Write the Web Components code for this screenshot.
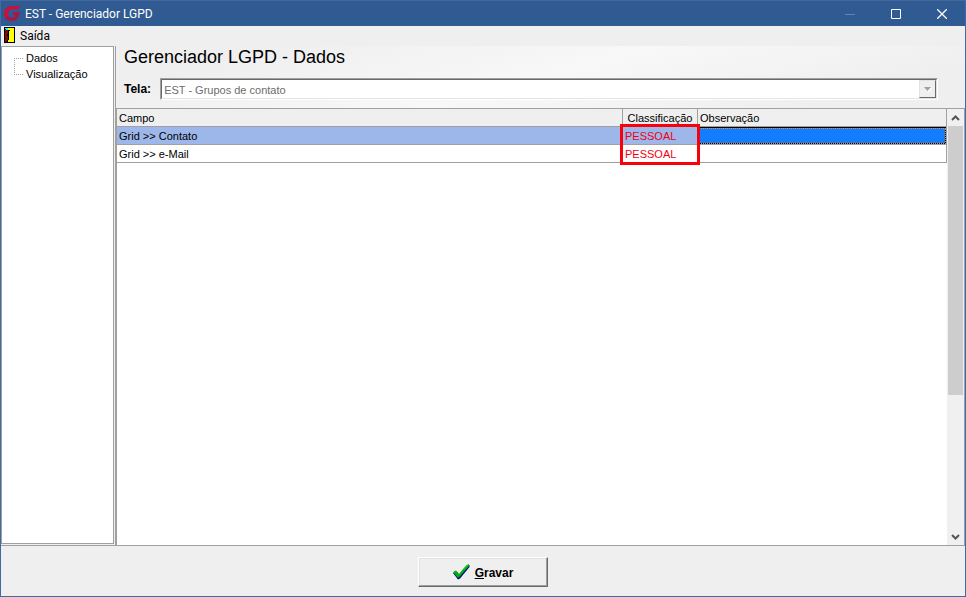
<!doctype html>
<html lang="pt-BR">
<meta charset="utf-8">
<title>EST - Gerenciador LGPD</title>

<style>
  html, body {
    height: 100%;
    margin: 0;
  }
  body {
    font: 11px/16px "Liberation Sans", Arial, sans-serif;
    color: #000;
    --face: #efefef;
    --line: #a0a0a0;
    --frame: #3d6ba5;
    --caption: 12px/16px Roboto, "Open Sans", sans-serif;
  }
</style>

<lgpd-window>
  <title-bar slot="title">EST - Gerenciador LGPD</title-bar>
  <menu-bar slot="menu">Saída</menu-bar>
  <nav-tree slot="nav">
    <nav-item>Dados</nav-item>
    <nav-item>Visualização</nav-item>
  </nav-tree>
  <screen-header slot="header" value="EST - Grupos de contato">Gerenciador LGPD - Dados</screen-header>
  <field-grid slot="grid"></field-grid>
  <scroll-rail slot="scroll"></scroll-rail>
  <save-button slot="footer"></save-button>
</lgpd-window>

<template id="lgpd-window">
  <style>
    :host {
      display: flex;
      flex-direction: column;
      box-sizing: border-box;
      height: 100vh;
      border: 1px solid var(--frame);
      border-top: 0;
      background: var(--face);
    }
    main {
      flex: 1;
      min-height: 0;
      display: flex;
      border-bottom: 1px solid var(--line);
    }
    aside {
      flex: none;
      box-sizing: border-box;
      width: 115px;
      display: flex;
      border-right: 1px solid var(--line);
    }
    .work {
      flex: 1;
      min-width: 0;
      display: flex;
      flex-direction: column;
    }
    .data {
      flex: 1;
      min-height: 0;
      display: flex;
      background: #fff;
      border: 1px solid var(--line);
      border-bottom: 0;
    }
    footer {
      display: flex;
      justify-content: center;
      padding: 11px 0 9px;
    }
  </style>
  <slot name="title"></slot>
  <slot name="menu"></slot>
  <main>
    <aside><slot name="nav"></slot></aside>
    <div class="work">
      <slot name="header"></slot>
      <div class="data">
        <slot name="grid"></slot>
        <slot name="scroll"></slot>
      </div>
    </div>
  </main>
  <footer><slot name="footer"></slot></footer>
</template>

<template id="title-bar">
  <style>
    :host {
      display: flex;
      align-items: center;
      height: 26px;
      box-sizing: border-box;
      border-top: 1px solid #44689b;
      background: #2f5a92;
      color: #fff;
      font: var(--caption);
    }
    .logo { margin: 0 4px 0 3px; }
    .name { flex: 1; }
    button {
      width: 46px;
      height: 25px;
      padding: 0;
      border: 0;
      background: none;
      color: #fff;
    }
    button:disabled { color: #6384b0; }
    svg { display: block; margin: 0 auto; }
  </style>
  <svg class="logo" width="17" height="17" viewBox="0 0 17 17" aria-hidden="true">
    <path d="M16.500 0 14 4.500H8.500Q4.500 4.500 4.500 8.500L4 11 1 13Q0 11 0 9Q0 1 8 1H13Q15 1 16.500 0Z" fill="#c5123f"/>
    <path d="M8 7H16L14 12.500Q12.500 16 8 16Q3 16 1 13L4 10Q5 12.500 8 12.500Q10.500 12.500 11 10H9Z" fill="#a5184a"/>
  </svg>
  <span class="name"><slot></slot></span>
  <button disabled aria-label="Minimizar">
    <svg width="10" height="10"><path d="M0 5.500H10" stroke="currentColor"/></svg>
  </button>
  <button aria-label="Maximizar">
    <svg width="10" height="10"><path d="M.5 .5H9.500V9.500H.5Z" fill="none" stroke="currentColor"/></svg>
  </button>
  <button aria-label="Fechar">
    <svg width="10" height="10"><path d="M0 0 10 10M10 0 0 10" stroke="currentColor" stroke-width="1.300"/></svg>
  </button>
</template>

<template id="menu-bar">
  <style>
    :host {
      display: flex;
      height: 20px;
    }
    button {
      display: flex;
      align-items: center;
      gap: 5px;
      padding: 0 3px 2px;
      border: 0;
      background: none;
      color: inherit;
      font: var(--caption);
    }
    span { padding-top: 2px; }
  </style>
  <button>
    <svg width="11" height="16" aria-hidden="true" shape-rendering="crispEdges">
      <path d="M0 0H11V16H0Z" fill="#000"/>
      <path d="M4 1H10V15H4Z" fill="#ff0"/>
      <path d="M1 1H4V3H1Z" fill="#0ff"/>
      <path d="M1 2H2V3H4V4H5V13H4V14H3V15H1Z" fill="#7b0a0a"/>
      <path d="M4 3H6V4H5V13H4V14H3V13H4Z" fill="#000"/>
      <path d="M3 7H4V9H3Z" fill="#000"/>
    </svg>
    <span><slot></slot></span>
  </button>
</template>

<template id="nav-tree">
  <style>
    :host {
      flex: 1;
      display: block;
      margin: 0 1px 1px 0;
      padding: 3px 0 0 12px;
      background: #fff;
      border: 1px solid var(--line);
    }
  </style>
  <nav><slot></slot></nav>
</template>

<template id="nav-item">
  <style>
    :host {
      display: flex;
      height: 16px;
    }
    i {
      width: 8px;
      height: 8px;
      border-left: 1px solid transparent;
      border-bottom: 1px dotted #a0a0a0;
    }
    :host(:last-child) i {
      height: 16px;
      margin-top: -8px;
      border-left: 1px dotted #a0a0a0;
    }
    a {
      margin-left: 3px;
      color: inherit;
      text-decoration: none;
    }
  </style>
  <i></i><a href="#"><slot></slot></a>
</template>

<template id="screen-header">
  <style>
    :host {
      display: block;
      padding: 1px 27px 8px 8px;
      background: linear-gradient(165deg, #efefef 15%, #f8f8f8 50%, #efefef 85%);
    }
    h1 {
      margin: 0 0 11px;
      font-size: 18px;
      line-height: 20px;
      font-weight: 400;
    }
    .field {
      display: flex;
      align-items: center;
      gap: 9px;
    }
    label {
      font-size: 12px;
      font-weight: 700;
    }
    .combo {
      flex: 1;
      display: flex;
      position: relative;
      border: 1px solid;
      border-color: #a0a0a0 #fff #fff #a0a0a0;
    }
    select {
      appearance: none;
      flex: 1;
      height: 20px;
      padding: 2px 2px 0;
      border: 1px solid;
      border-color: #696969 #e3e3e3 #e3e3e3 #696969;
      border-radius: 0;
      background: #fff;
      color: #6d6d6d;
      font: inherit;
      opacity: 1;
    }
    .arrow {
      position: absolute;
      top: 1px;
      right: 1px;
      bottom: 1px;
      width: 15px;
      display: grid;
      place-items: center;
      background: var(--face);
      border: 1px solid;
      border-color: #e3e3e3 #696969 #696969 #e3e3e3;
      pointer-events: none;
    }
  </style>
  <h1><slot></slot></h1>
  <div class="field">
    <label for="screen">Tela:</label>
    <div class="combo">
      <select id="screen" disabled><option></option></select>
      <span class="arrow">
        <svg width="8" height="5" aria-hidden="true">
          <path d="M1 1H8L4.500 5Z" fill="#fff"/>
          <path d="M0 0H7L3.500 4Z" fill="#a0a0a0"/>
        </svg>
      </span>
    </div>
  </div>
</template>

<template id="field-grid">
  <style>
    :host {
      flex: 1;
      min-width: 0;
      display: block;
    }
    table {
      width: 100%;
      table-layout: fixed;
      border-collapse: separate;
      border-spacing: 0;
    }
    .class { width: 75px; }
    .note { width: 30%; }
    th, td {
      box-sizing: border-box;
      height: 18px;
      padding: 2px 2px 0;
      border: solid var(--line);
      border-width: 0 1px 1px 0;
      line-height: 15px;
      font-weight: 400;
      text-align: left;
      white-space: nowrap;
    }
    th { background: var(--face); }
    th:nth-child(2) { text-align: center; }
    td:nth-child(-n+2) { border-right-color: transparent; }
    td:nth-child(2) { color: #f00010; }
    .selected td { background: #9db7eb; }
    .selected td:last-child {
      background: #147dff;
      outline: 1px dotted #e8902c;
      outline-offset: -2px;
      box-shadow: inset 0 0 0 1px #000;
    }
    .mark { position: relative; }
    .mark::after {
      content: "";
      position: absolute;
      z-index: 1;
      inset: -3px -3px -21px -3px;
      border: 3px solid #f8000c;
    }
  </style>
  <table>
    <colgroup><col><col class="class"><col class="note"></colgroup>
    <thead>
      <tr><th>Campo</th><th>Classificação</th><th>Observação</th></tr>
    </thead>
    <tbody></tbody>
  </table>
</template>

<template id="scroll-rail">
  <style>
    :host {
      flex: none;
      width: 17px;
      display: flex;
      flex-direction: column;
      background: #f0f0f0;
    }
    button {
      height: 17px;
      padding: 0;
      border: 0;
      background: none;
    }
    svg { display: block; margin: 0 auto; }
    .track { flex: 1; padding: 0 1px; }
    .thumb { height: 67%; background: #cdcdcd; }
  </style>
  <button aria-label="Rolar para cima">
    <svg width="9" height="6"><path d="M1 5 4.500 1.500 8 5" fill="none" stroke="#555" stroke-width="2"/></svg>
  </button>
  <div class="track"><div class="thumb"></div></div>
  <button aria-label="Rolar para baixo">
    <svg width="9" height="6"><path d="M1 1 4.500 4.500 8 1" fill="none" stroke="#555" stroke-width="2"/></svg>
  </button>
</template>

<template id="save-button">
  <style>
    :host { display: block; }
    button {
      display: flex;
      align-items: center;
      justify-content: center;
      gap: 5px;
      width: 130px;
      height: 30px;
      padding: 0;
      border: 1px solid;
      border-color: #fff #696969 #696969 #fff;
      box-shadow: inset -1px -1px #a0a0a0, inset 1px 1px #e3e3e3;
      background: var(--face);
      color: inherit;
      font: bold 12px/16px "Liberation Sans", Arial, sans-serif;
    }
    span { padding-top: 2px; }
  </style>
  <button accesskey="g">
    <svg width="17" height="16" aria-hidden="true">
      <path d="M0 9 4 7.500 6 11 14 1.500 16.500 1V3L7 14.500 5 15.500Z" fill="#000080"/>
      <path d="M0 8 3 6.500 6 10 13 1.500 16 0V2L6 13.500H4.500Z" fill="#00b010"/>
      <path d="M13 1.500 16 0 11 5.500Z" fill="#20e030"/>
    </svg>
    <span><u>G</u>ravar</span>
  </button>
</template>

<script>
  class TemplateElement extends HTMLElement {
    constructor() {
      super();
      const template = document.getElementById(this.localName);
      this.attachShadow({mode: 'open'});
      this.shadowRoot.appendChild(template.content.cloneNode(true));
    }
  }

  for (const name of ['lgpd-window', 'title-bar', 'menu-bar', 'nav-tree', 'nav-item', 'scroll-rail', 'save-button']) {
    customElements.define(name, class extends TemplateElement {});
  }

  class ScreenHeader extends TemplateElement {
    connectedCallback() {
      this.shadowRoot.querySelector('option').textContent = this.getAttribute('value');
    }
  }

  customElements.define('screen-header', ScreenHeader);

  class FieldGrid extends TemplateElement {
    set rows(rows) {
      const body = this.shadowRoot.querySelector('tbody');
      body.textContent = '';

      rows.forEach((row, i) => {
        const tr = body.insertRow();
        for (const text of row) {
          tr.insertCell().textContent = text;
        }
        if (i === 0) {
          tr.className = 'selected';
          tr.cells[1].className = 'mark';
        }
      });
    }
  }

  customElements.define('field-grid', FieldGrid);

  document.querySelector('field-grid').rows = [
    ['Grid >> Contato', 'PESSOAL', ''],
    ['Grid >> e-Mail', 'PESSOAL', '']
  ];
</script>
</html>
